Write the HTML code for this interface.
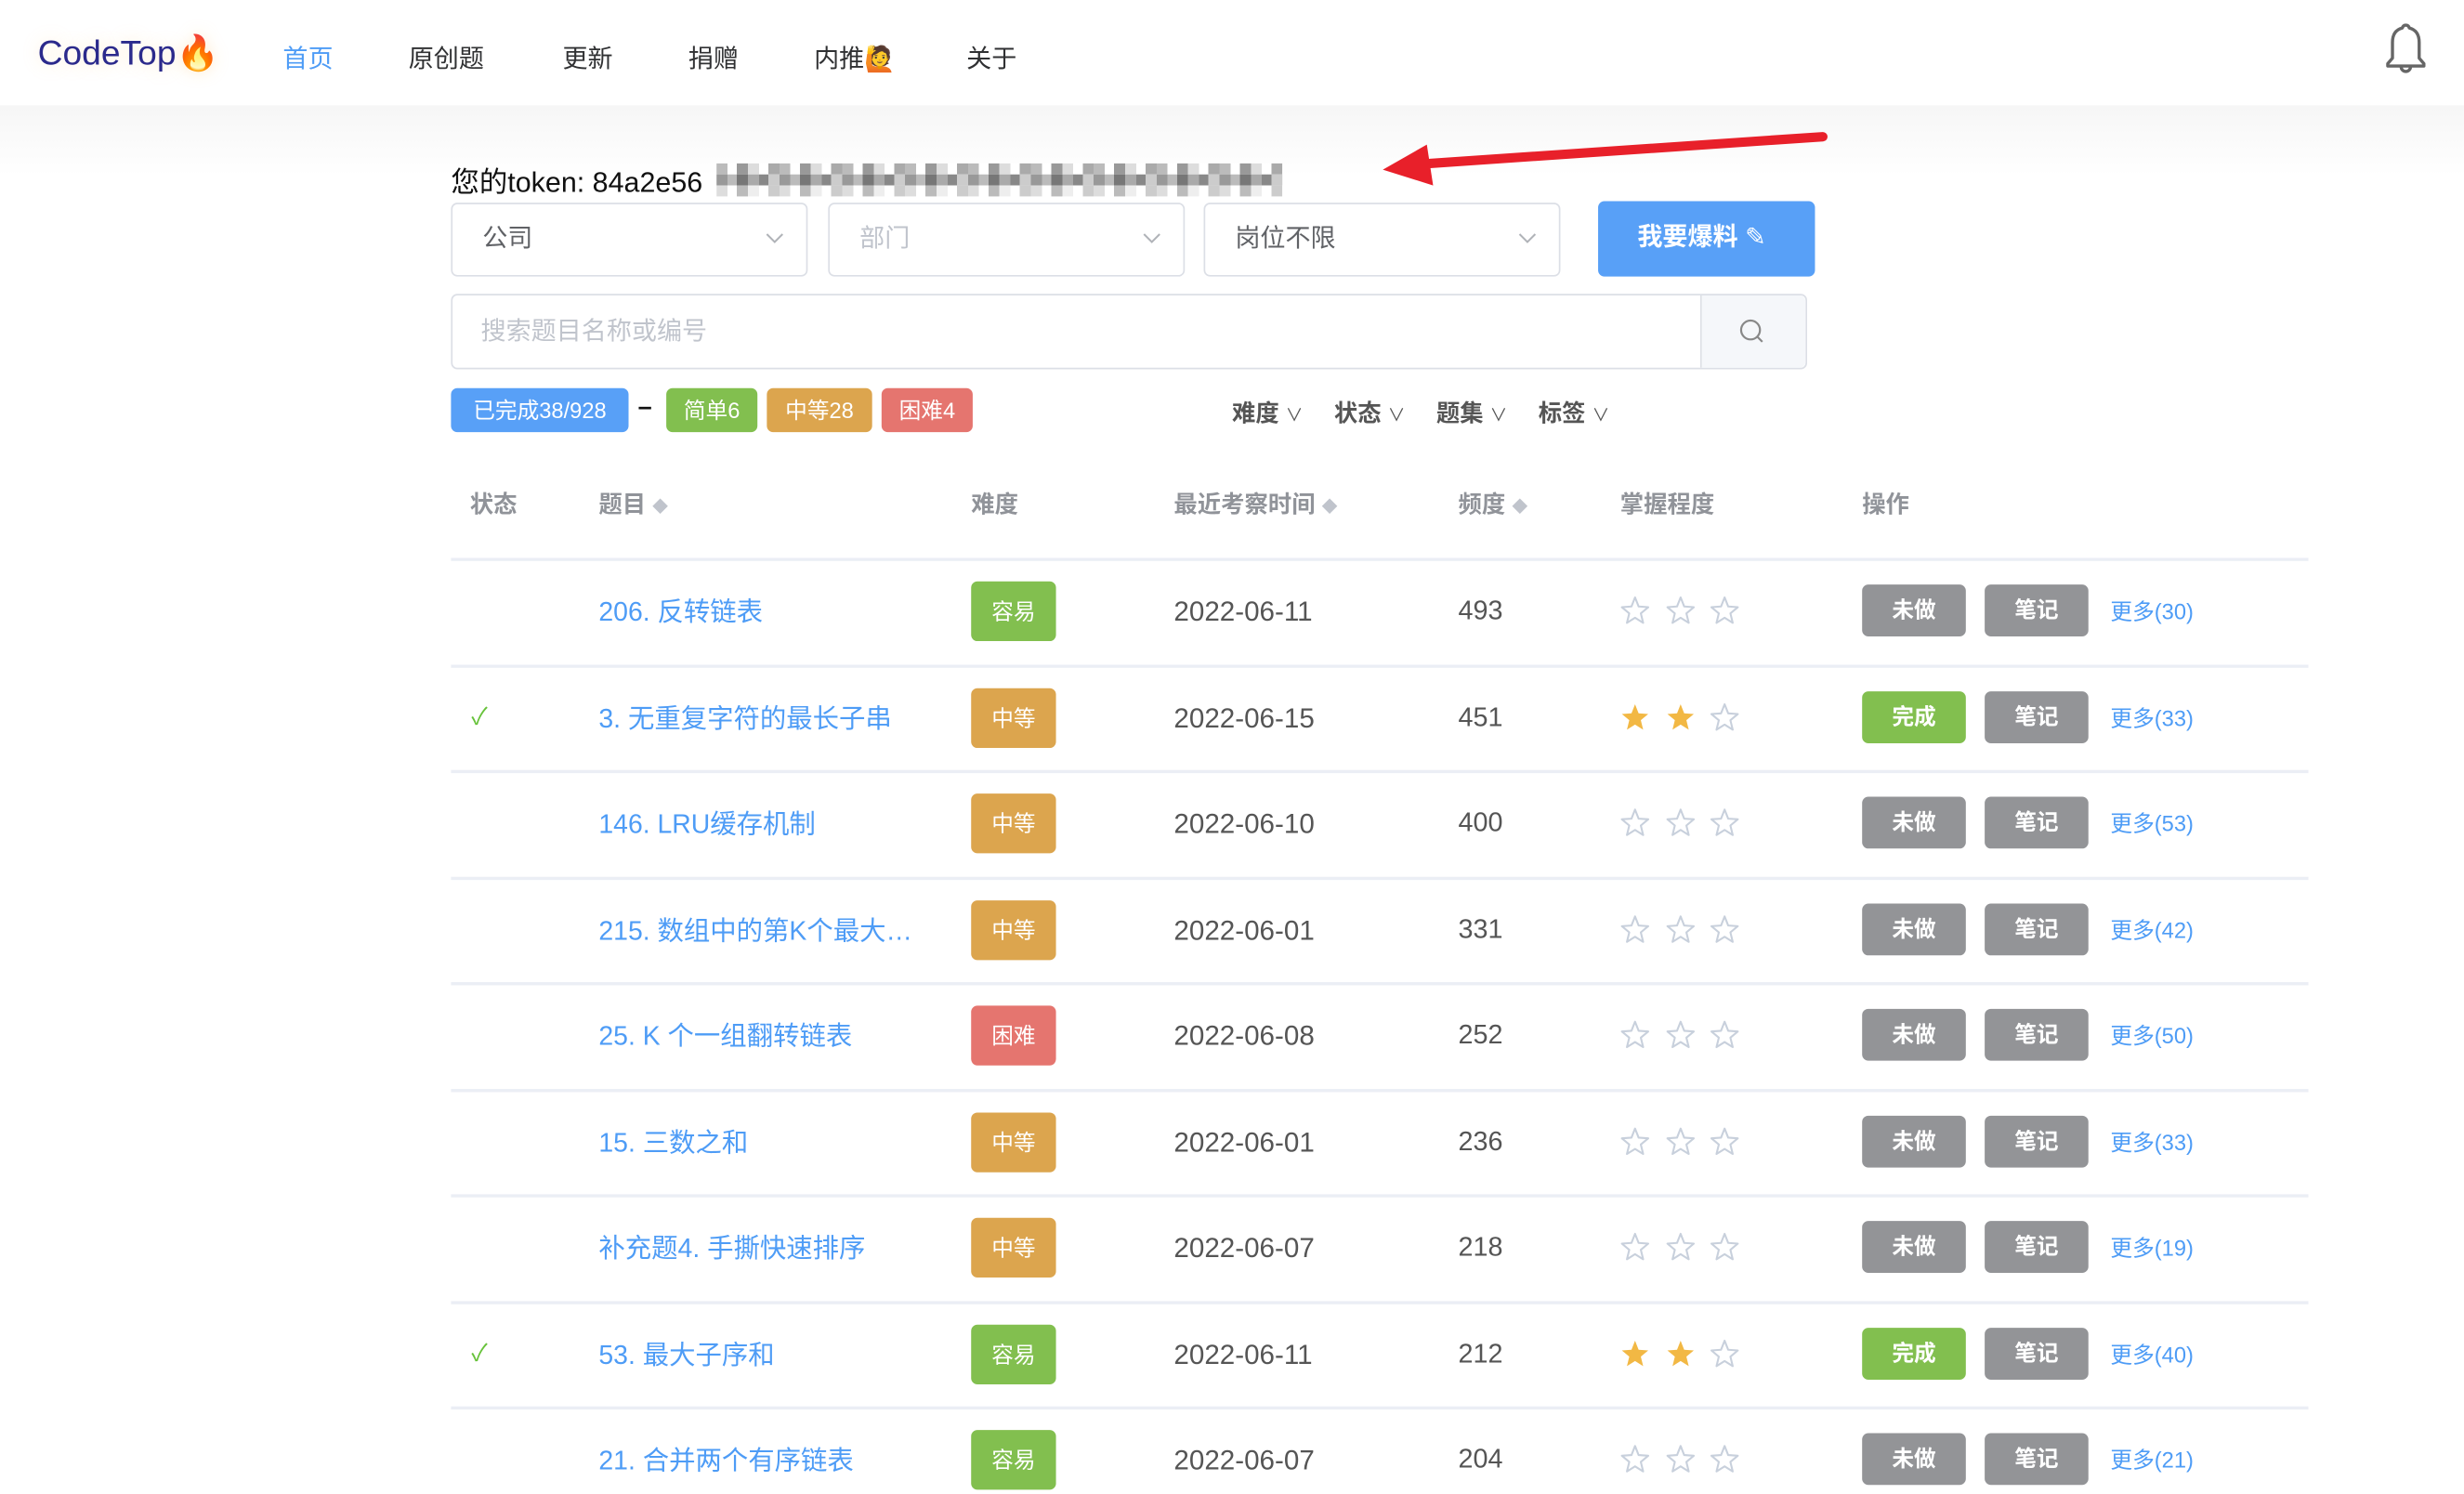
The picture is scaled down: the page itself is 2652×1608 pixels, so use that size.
<!DOCTYPE html>
<html><head><meta charset="utf-8">
<style>
*{margin:0;padding:0;box-sizing:border-box}
html,body{width:2652px;height:1608px;overflow:hidden;background:#fff}
#w{position:absolute;left:0;top:0;width:1568px;height:951px;transform:scale(1.6913);transform-origin:0 0;font-family:"Liberation Sans","Noto Sans CJK SC",sans-serif;color:#606266}
.a{position:absolute;white-space:nowrap}
.hdr{position:absolute;left:0;top:0;width:1568px;height:67px;background:#fff}
.band{position:absolute;left:0;top:67px;width:1568px;height:45px;background:linear-gradient(#f6f6f6,#fff)}
.nav{position:absolute;top:24px;font-size:16px;color:#303133}
.sel{position:absolute;top:129px;width:227px;height:47px;border:1px solid #dcdfe6;border-radius:4px;background:#fff}
.sel span{position:absolute;left:19px;top:13px;font-size:16px;line-height:20px}
.chev{position:absolute;right:14px;top:18px;width:12px;height:8px}
.tag{position:absolute;top:247px;height:28px;border-radius:4px;color:#fff;font-size:14px;line-height:28px;text-align:center}
.dd{position:absolute;top:252px;font-size:15px;font-weight:bold;color:#555}
.th{position:absolute;top:310px;font-size:15px;font-weight:bold;color:#909399}
.line{position:absolute;left:287px;width:1182px;height:2px;background:#ebeef5}
.t{position:absolute;font-size:16.8px;line-height:20px;color:#4e9cf6;white-space:nowrap}
.d{position:absolute;left:618px;width:54px;height:38px;border-radius:4px;color:#fff;font-size:14px;line-height:38px;text-align:center}
.dt{position:absolute;left:747px;font-size:17.5px;line-height:20px;color:#555}
.fq{position:absolute;left:928px;font-size:17px;line-height:20px;color:#555}
.st{position:absolute;width:21px;height:21px}
.b{position:absolute;width:66px;height:33px;border-radius:4px;color:#fff;font-size:14px;font-weight:bold;line-height:33px;text-align:center}
.m{position:absolute;left:1343px;font-size:14px;line-height:20px;color:#4e9cf6}
.px{position:absolute;height:7px}
</style></head><body><div id="w">
<div class="hdr"></div><div class="band"></div>
<div class="a" style="left:24px;top:21px;font-size:22px;color:#2b2a8c;text-shadow:0 0 10px rgba(255,200,120,.35)">CodeTop🔥</div>
<div class="nav" style="left:180px;color:#4e9cf6">首页</div>
<div class="nav" style="left:260px">原创题</div>
<div class="nav" style="left:358px">更新</div>
<div class="nav" style="left:438px">捐赠</div>
<div class="nav" style="left:518px">内推🙋</div>
<div class="nav" style="left:615px">关于</div>
<svg class="a" style="left:1514px;top:13px" width="34" height="36" viewBox="0 0 34 36"><path d="M17 3c-1.5 0-2 1-2.2 1.8C10 6 8.5 9.5 8.5 14v10L5.5 27.5v1.5h23v-1.5L25.5 24V14c0-4.5-1.5-8-6.3-9.2C19 4 18.5 3 17 3z M14 29.5a3 3 0 0 0 6 0" fill="none" stroke="#666" stroke-width="2" stroke-linejoin="round"/></svg>

<div class="a" style="left:287px;top:102px;font-size:18px;color:#111">您的token: 84a2e56</div>
<div class="px" style="left:456px;top:104px;width:360px;background:repeating-linear-gradient(90deg,#bbb 0 7px,#fff 7px 13px,#999 13px 20px,#ddd 20px 27px,#fff 27px 33px,#aaa 33px 40px)"></div>
<div class="px" style="left:456px;top:111px;width:360px;background:repeating-linear-gradient(90deg,#999 0 7px,#bbb 7px 13px,#777 13px 20px,#aaa 20px 27px,#888 27px 33px,#ccc 33px 40px)"></div>
<div class="px" style="left:456px;top:118px;width:360px;background:repeating-linear-gradient(90deg,#ddd 0 7px,#fff 7px 13px,#bbb 13px 20px,#eee 20px 27px,#fff 27px 33px,#ccc 33px 40px)"></div>
<svg class="a" style="left:870px;top:78px" width="300" height="45" viewBox="0 0 300 45"><path d="M290 9 L40 26" stroke="#e8202a" stroke-width="6" stroke-linecap="round"/><path d="M10 30 L38 14 L42 40 Z" fill="#e8202a"/></svg>

<div class="sel" style="left:287px"><span>公司</span><svg class="chev" viewBox="0 0 12 8"><path d="M1 1l5 5 5-5" fill="none" stroke="#b0b3b8" stroke-width="1.2"/></svg></div>
<div class="sel" style="left:527px"><span style="color:#c0c4cc">部门</span><svg class="chev" viewBox="0 0 12 8"><path d="M1 1l5 5 5-5" fill="none" stroke="#b0b3b8" stroke-width="1.2"/></svg></div>
<div class="sel" style="left:766px"><span>岗位不限</span><svg class="chev" viewBox="0 0 12 8"><path d="M1 1l5 5 5-5" fill="none" stroke="#b0b3b8" stroke-width="1.2"/></svg></div>
<div class="a" style="left:1017px;top:128px;width:138px;height:48px;background:#58a0f7;border-radius:4px;color:#fff;font-size:16px;font-weight:bold;line-height:48px;padding-left:25px">我要爆料 <span style="font-weight:normal">✎</span></div>

<div class="a" style="left:287px;top:187px;width:863px;height:48px;border:1px solid #dcdfe6;border-radius:4px;background:#fff"></div>
<div class="a" style="left:1082px;top:188px;width:67px;height:46px;background:#f5f7fa;border-left:1px solid #dcdfe6;border-radius:0 4px 4px 0"></div>
<svg class="a" style="left:1106px;top:202px" width="18" height="18" viewBox="0 0 18 18"><circle cx="8" cy="8" r="6" fill="none" stroke="#888" stroke-width="1.3"/><path d="M12.5 12.5l3 3" stroke="#888" stroke-width="1.3"/></svg>
<div class="a" style="left:306px;top:202px;font-size:16px;line-height:20px;color:#c0c4cc">搜索题目名称或编号</div>

<div class="tag" style="left:287px;width:113px;background:#58a0f7">已完成38/928</div>
<div class="a" style="left:406px;top:251px;font-size:16px;color:#111;font-weight:bold">–</div>
<div class="tag" style="left:424px;width:58px;background:#82bf4f">简单6</div>
<div class="tag" style="left:488px;width:67px;background:#dca54e">中等28</div>
<div class="tag" style="left:561px;width:58px;background:#e5756f">困难4</div>
<div class="dd" style="left:784px">难度 <span style="font-weight:normal;font-size:11px">∨</span></div>
<div class="dd" style="left:849px">状态 <span style="font-weight:normal;font-size:11px">∨</span></div>
<div class="dd" style="left:914px">题集 <span style="font-weight:normal;font-size:11px">∨</span></div>
<div class="dd" style="left:979px">标签 <span style="font-weight:normal;font-size:11px">∨</span></div>

<div class="th" style="left:299px">状态</div>
<div class="th" style="left:381px">题目 <span style="font-size:10px;color:#c0c4cc">◆</span></div>
<div class="th" style="left:618px">难度</div>
<div class="th" style="left:747px">最近考察时间 <span style="font-size:10px;color:#c0c4cc">◆</span></div>
<div class="th" style="left:928px">频度 <span style="font-size:10px;color:#c0c4cc">◆</span></div>
<div class="th" style="left:1031px">掌握程度</div>
<div class="th" style="left:1185px">操作</div>

<svg width="0" height="0" style="position:absolute"><defs>
<symbol id="so" viewBox="0 0 24 24"><path d="M12 2.5l2.6 6.6 7 .5-5.4 4.5 1.7 6.9L12 17.3 6.1 21l1.7-6.9L2.4 9.6l7-.5z" fill="none" stroke="#c8d0dc" stroke-width="1.4" stroke-linejoin="round"/></symbol>
<symbol id="sf" viewBox="0 0 24 24"><path d="M12 2.5l2.6 6.6 7 .5-5.4 4.5 1.7 6.9L12 17.3 6.1 21l1.7-6.9L2.4 9.6l7-.5z" fill="#f2b844"/></symbol>
</defs></svg>

<div id="rows"></div>
</div>
<script>
var R=[["206. 反转链表","容易","2022-06-11","493",0,"30"],["3. 无重复字符的最长子串","中等","2022-06-15","451",2,"33"],["146. LRU缓存机制","中等","2022-06-10","400",0,"53"],["215. 数组中的第K个最大…","中等","2022-06-01","331",0,"42"],["25. K 个一组翻转链表","困难","2022-06-08","252",0,"50"],["15. 三数之和","中等","2022-06-01","236",0,"33"],["补充题4. 手撕快速排序","中等","2022-06-07","218",0,"19"],["53. 最大子序和","容易","2022-06-11","212",2,"40"],["21. 合并两个有序链表","容易","2022-06-07","204",0,"21"]];
var C={"容易":"#82bf4f","中等":"#dca54e","困难":"#e5756f"};
var h='';
h+='<div class="line" style="top:355px"></div>';
for(var i=0;i<R.length;i++){var r=R[i],c=389+i*67.5,L=355+(i+1)*67.5;
if(i<8)h+='<div class="line" style="top:'+L+'px"></div>';
if(r[4])h+='<div class="a" style="left:300px;top:'+(c-10)+'px;color:#67c23a;font-size:15px;line-height:20px">✓</div>';
h+='<div class="t" style="left:381px;top:'+(c-9)+'px">'+r[0]+'</div>';
h+='<div class="d" style="top:'+(c-19)+'px;background:'+C[r[1]]+'">'+r[1]+'</div>';
h+='<div class="dt" style="top:'+(c-10)+'px">'+r[2]+'</div>';
h+='<div class="fq" style="top:'+(c-10)+'px">'+r[3]+'</div>';
for(var s=0;s<3;s++){h+='<svg class="st" style="left:'+(1030+s*28.5)+'px;top:'+(c-11)+'px"><use href="#'+(s<r[4]?'sf':'so')+'"/></svg>';}
h+='<div class="b" style="left:1185px;top:'+(c-17)+'px;background:'+(r[4]?'#82bf4f':'#939497')+'">'+(r[4]?'完成':'未做')+'</div>';
h+='<div class="b" style="left:1263px;top:'+(c-17)+'px;background:#939497">笔记</div>';
h+='<div class="m" style="top:'+(c-10)+'px">更多('+r[5]+')</div>';}
document.getElementById('rows').innerHTML=h;
</script>
</body></html>
